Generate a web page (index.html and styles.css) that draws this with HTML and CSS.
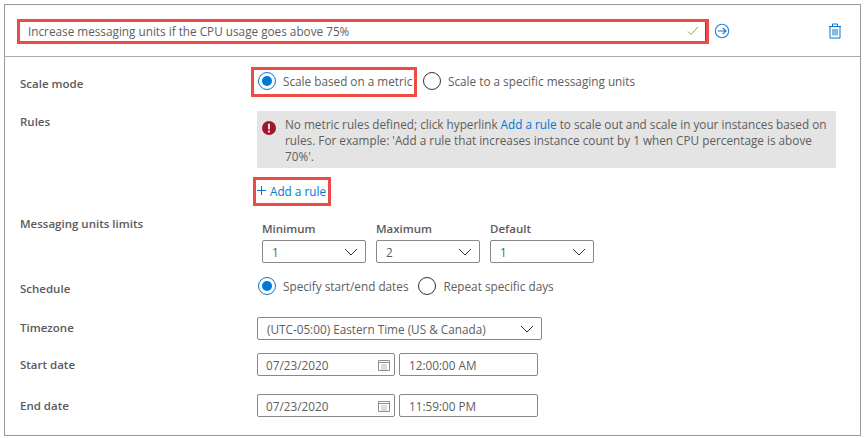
FILE: index.html
```html
<!DOCTYPE html>
<html lang="en">
<head>
    <meta charset="UTF-8" />
    <title>Scale condition</title>
    <link rel="stylesheet" href="styles.css">
</head>
<body>

<div class="panel">

    <!-- Condition name -->
    <div class="header">
        <div class="name-box">
            <span class="name-text">Increase messaging units if the CPU usage goes above 75%</span>
            <svg class="check" width="12" height="10" viewBox="0 0 12 10"><path d="M1 5.5 L4 8.5 L11 1" fill="none" stroke="#6cb24f" stroke-width="1"/></svg>
        </div>
        <svg class="arrow" width="16" height="16" viewBox="0 0 16 16"><circle cx="8" cy="8" r="6.7" fill="none" stroke="#2b88d8" stroke-width="1.1"/><path d="M3.8 8 H12 M8.6 4.8 L12 8 L8.6 11.2" fill="none" stroke="#1f6fb5" stroke-width="1.1"/></svg>
        <svg class="trash" width="14" height="16" viewBox="0 0 14 16"><path d="M1 3.5 H13 M4.5 3.5 V1 H9.5 V3.5 M2 3.5 V15 H12 V3.5 M5 6 V12.5 M7 6 V12.5 M9 6 V12.5" fill="none" stroke="#0078d4" stroke-width="1"/></svg>
    </div>

    <div class="form">

        <div class="row row-mode">
            <div class="label label-mode">Scale mode</div>
            <div class="radios radios-mode">
                <div class="mark-box">
                    <span class="radio on"></span>
                    <span class="radio-text">Scale based on a metric</span>
                </div>
                <span class="radio second"></span>
                <span class="radio-text">Scale to a specific messaging units</span>
            </div>
        </div>

        <div class="row row-rules">
            <div class="label label-rules">Rules</div>
            <div class="rules">
                <div class="notice">
                    <svg class="notice-icon" width="16" height="16" viewBox="0 0 16 16"><circle cx="8" cy="8" r="7" fill="#a4152c"/><path d="M8 3.8 V9.2 M8 10.6 V12.4" stroke="#fff" stroke-width="1.8"/></svg>
                    <p>No metric rules defined; click hyperlink <a href="#">Add a rule</a> to scale out and scale in your instances based on rules. For example: 'Add a rule that increases instance count by 1 when CPU percentage is above 70%'.</p>
                </div>
                <div class="add-box">
                    <a href="#" class="add-link"><svg class="plus" width="9" height="9" viewBox="0 0 9 9"><path d="M4.5 0 V9 M0 4.5 H9" stroke="#0078d4" stroke-width="1"/></svg>Add a rule</a>
                </div>
            </div>
        </div>

        <div class="row row-limits">
            <div class="label">Messaging units limits</div>
            <div class="limits">
                <div class="limit">
                    <div class="limit-label">Minimum</div>
                    <div class="field select limit-select"><span>1</span><svg class="chevron" width="14" height="8" viewBox="0 0 14 8"><path d="M1 1 L7 7 L13 1" fill="none" stroke="#333" stroke-width="1"/></svg></div>
                </div>
                <div class="limit">
                    <div class="limit-label">Maximum</div>
                    <div class="field select limit-select"><span>2</span><svg class="chevron" width="14" height="8" viewBox="0 0 14 8"><path d="M1 1 L7 7 L13 1" fill="none" stroke="#333" stroke-width="1"/></svg></div>
                </div>
                <div class="limit">
                    <div class="limit-label">Default</div>
                    <div class="field select limit-select"><span>1</span><svg class="chevron" width="14" height="8" viewBox="0 0 14 8"><path d="M1 1 L7 7 L13 1" fill="none" stroke="#333" stroke-width="1"/></svg></div>
                </div>
            </div>
        </div>

        <div class="row row-schedule">
            <div class="label label-schedule">Schedule</div>
            <div class="radios radios-plain">
                <span class="radio on"></span>
                <span class="radio-text">Specify start/end dates</span>
                <span class="radio third"></span>
                <span class="radio-text">Repeat specific days</span>
            </div>
        </div>

        <div class="row row-zone">
            <div class="label label-zone">Timezone</div>
            <div class="field select zone-select"><span>(UTC-05:00) Eastern Time (US &amp; Canada)</span><svg class="chevron" width="14" height="8" viewBox="0 0 14 8"><path d="M1 1 L7 7 L13 1" fill="none" stroke="#333" stroke-width="1"/></svg></div>
        </div>

        <div class="row row-start">
            <div class="label label-field">Start date</div>
            <div class="dates">
                <div class="field date"><span>07/23/2020</span><svg class="calendar" width="12" height="12" viewBox="0 0 12 12"><path d="M.5 1.5 H11.5 V11.5 H.5 Z M.5 3.5 H11.5" fill="none" stroke="#8f8f8f" stroke-width="1"/><path d="M3 6 H9 M3 8 H9 M3 10 H9" stroke="#bbb" stroke-width="1"/></svg></div>
                <div class="field time">12:00:00 AM</div>
            </div>
        </div>

        <div class="row row-end">
            <div class="label label-field">End date</div>
            <div class="dates">
                <div class="field date"><span>07/23/2020</span><svg class="calendar" width="12" height="12" viewBox="0 0 12 12"><path d="M.5 1.5 H11.5 V11.5 H.5 Z M.5 3.5 H11.5" fill="none" stroke="#8f8f8f" stroke-width="1"/><path d="M3 6 H9 M3 8 H9 M3 10 H9" stroke="#bbb" stroke-width="1"/></svg></div>
                <div class="field time">11:59:00 PM</div>
            </div>
        </div>

    </div>
</div>

</body>
</html>
```

FILE: styles.css
```css
* {
    box-sizing: border-box;
}

body {
    margin: 4px;
    background: #fff;
    font-family: "Open Sans", "Noto Sans", sans-serif;
    font-size: 11.75px;
    line-height: 16px;
    color: #605e5c;
}

a {
    color: #0078d4;
    text-decoration: none;
}

.panel {
    width: 857px;
    height: 432px;
    border: 1px solid #999;
}

/* Header */
.header {
    display: flex;
    align-items: center;
    height: 52px;
    padding: 0 0 0 12px;
    border-bottom: 1px solid #aaa;
}

.name-box {
    display: flex;
    align-items: center;
    justify-content: space-between;
    width: 692px;
    height: 25px;
    margin-top: 1px;
    padding: 0 7px 0 8px;
    border: 3px solid #ee4b47;
    box-shadow: inset -1px 0 0 #6b3fa0;
}

.arrow {
    margin-left: 5px;
}

.trash {
    margin-left: 98px;
}

/* Rows */
.row {
    display: flex;
    align-items: flex-start;
    padding-left: 15px;
}

.label {
    flex: none;
    width: 231px;
    font-size: 11.5px;
    font-weight: 600;
    color: #5a5a5a;
}

.row-mode {
    margin-top: 10px;
}

.label-mode {
    padding-top: 9px;
}

.row-rules {
    margin-top: 14px;
}

.label-rules {
    padding-top: 3px;
}

.row-limits {
    margin-top: 10px;
}

.row-schedule {
    margin-top: 13px;
}

.label-schedule {
    padding-top: 5px;
}

.row-zone {
    margin-top: 20px;
}

.label-zone {
    padding-top: 3px;
}

.row-start {
    margin-top: 13px;
}

.row-end {
    margin-top: 18px;
}

.label-field {
    padding-top: 4px;
}

/* Radios */
.radios {
    display: flex;
    align-items: center;
}

.radios-mode > .radio,
.radios-mode > .radio-text {
    margin-bottom: 2px;
}

.radios-plain {
    height: 20px;
    padding-left: 7px;
}

.mark-box {
    display: flex;
    align-items: center;
    width: 166px;
    height: 30px;
    padding: 0 0 2px 4px;
    border: 3px solid #ee4b47;
}

.radio {
    flex: none;
    position: relative;
    width: 18px;
    height: 18px;
    border: 1px solid #333;
    border-radius: 50%;
    background: #fff;
}

.radio.on {
    border-color: #0078d4;
}

.radio.on::after {
    content: "";
    position: absolute;
    left: 3px;
    top: 3px;
    width: 10px;
    height: 10px;
    border-radius: 50%;
    background: #0078d4;
}

.radio.second {
    margin-left: 6px;
}

.radio.third {
    margin-left: 10px;
}

.radio-text {
    margin-left: 7px;
    white-space: nowrap;
}

/* Rules */
.rules {
    width: 585px;
}

.notice {
    display: flex;
    align-items: flex-start;
    width: 579px;
    height: 57px;
    margin-left: 6px;
    padding: 5px 8px 0 4px;
    background: #e4e4e4;
}

.notice-icon {
    flex: none;
    margin: 4px 8px 0 0;
}

.notice p {
    margin: 0;
}

.add-box {
    display: flex;
    align-items: center;
    width: 78px;
    height: 29px;
    margin: 9px 0 0 2px;
    padding: 0 0 2px 1px;
    border: 3px solid #ee4b47;
}

.add-link {
    display: flex;
    align-items: center;
    white-space: nowrap;
}

.plus {
    margin-right: 4px;
}

/* Fields */
.field {
    display: flex;
    align-items: center;
    height: 23px;
    border: 1px solid #8a8886;
    border-radius: 2px;
    background: #fff;
}

.select {
    justify-content: space-between;
    padding: 0 7px 0 9px;
}

.limits {
    display: flex;
    gap: 10px;
    padding: 5px 0 0 11px;
}

.limit-label {
    margin-bottom: 3px;
    font-size: 11.5px;
    font-weight: 600;
    color: #5a5a5a;
}

.limit-select {
    width: 104px;
}

.zone-select {
    width: 285px;
    margin-left: 6px;
}

.dates {
    display: flex;
    gap: 4px;
    margin-left: 6px;
}

.date {
    justify-content: space-between;
    width: 138px;
    padding: 0 4px 0 8px;
}

.time {
    width: 139px;
    padding-left: 9px;
}
```
